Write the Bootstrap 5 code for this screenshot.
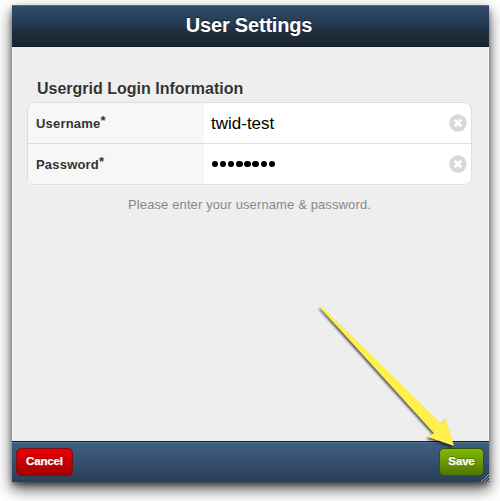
<!DOCTYPE html>
<html lang="en">
<head>
<meta charset="utf-8">
<meta name="viewport" content="width=device-width, initial-scale=1">
<title>User Settings</title>
<link href="https://cdn.jsdelivr.net/npm/bootstrap@5.3.0/dist/css/bootstrap.min.css" rel="stylesheet">
<style>
body{font-family:"Liberation Sans",Arial,sans-serif;background:#fff;height:501px;overflow:hidden;padding:5px 11px 0 12px;color:#333}
.window{height:477px;background:#eee;box-shadow:0 7px 14px rgba(0,0,0,.68),0 3px 5px rgba(0,0,0,.36)}
.title-bar{height:42px;background:linear-gradient(#304b69,#263a52 45%,#1f2d3d 65%,#1a2532);border-top:1px solid #58728e;border-bottom:1px solid #121b24;padding:0 3px 2px 0}
.title-bar h1{font-size:20px;line-height:24px;letter-spacing:-.2px;color:#fff;text-shadow:0 -1px 0 rgba(0,0,0,.5)}
.content-area{border:solid #fafafa;border-width:0 1px;padding:32px 16px 0 14px}
.section-title{font-size:16px;line-height:20px;font-weight:700;color:#333;padding-left:10px;margin-bottom:3px;text-shadow:0 1px 0 #fff}
.section-title span,.tip span,.title-bar span,.field-name span,.entry span,.action span{display:inline-block;white-space:nowrap}
.fieldset-box{height:83px;border:1px solid #ddd;border-radius:8px;background:#fff;overflow:hidden;box-shadow:0 1px 0 #f9f9f9}
.field{height:40px}
.field+.field{height:41px;border-top:1px solid #ddd}
.field-name{width:176px;background:#f7f7f7;padding:2px 0 0 8px;font-size:13px;letter-spacing:.2px;font-weight:700}
.field-name sup{font-size:13px;top:-3px;line-height:0}
.entry{padding:0 4px 0 7px;font-size:17px;color:#000}
.entry span{padding-top:2px}
.entry svg{margin-top:-1px}
.dots{gap:1.8px;padding-left:1px}
.dots i{width:6.3px;height:6.3px;border-radius:50%;background:#000}
.tip{font-size:13px;line-height:18px;letter-spacing:.12px;color:#888;margin-top:11px}
.action-bar{height:41px;border-top:1px solid #101820;background:linear-gradient(#405f85,#2a3e57);box-shadow:inset 0 1px 0 #5b7798;padding:0 5px 1px 4px}
.action{height:28px;font-size:11.5px;line-height:1;font-weight:700;color:#fff;padding:1px 0 0;border-radius:5px;letter-spacing:-.15px;text-shadow:0 -1px 0 rgba(0,0,0,.35);-webkit-text-stroke:.25px #fff}
.action:hover{color:#fff}
.cancel{width:57px;border:1px solid #800c16;background:linear-gradient(#ef0000,#a10000)}
.save{width:45px;border:1px solid #345113;background:linear-gradient(#83ba00,#527500)}
.pointer{left:300px;top:290px;filter:drop-shadow(-1px 2px 1.2px rgba(0,0,0,.6))}
.grip{right:0;bottom:0}
</style>
<script src="https://cdn.jsdelivr.net/npm/bootstrap@5.3.0/dist/js/bootstrap.bundle.min.js"></script>
</head>
<body>
<main class="window d-flex flex-column position-relative">
  <header class="title-bar d-flex align-items-center justify-content-center flex-shrink-0"><h1 class="fw-bold m-0"><span>User Settings</span></h1></header>
  <section class="content-area flex-grow-1">
    <h2 class="section-title mt-0"><span>Usergrid Login Information</span></h2>
    <div class="fieldset-box d-flex flex-column">
      <div class="field d-flex">
        <div class="field-name d-flex align-items-center"><span>Username<sup>*</sup></span></div>
        <div class="entry flex-grow-1 d-flex align-items-center justify-content-between">
          <span>twid-test</span>
          <svg width="18" height="18" viewBox="0 0 18 18" aria-label="Clear"><circle cx="9" cy="9" r="8.7" fill="#d8d8d8"/><path d="M5.7 5.7l6.6 6.6M12.3 5.7l-6.6 6.6" stroke="#fff" stroke-width="2.7"/></svg>
        </div>
      </div>
      <div class="field d-flex">
        <div class="field-name d-flex align-items-center"><span>Password<sup>*</sup></span></div>
        <div class="entry flex-grow-1 d-flex align-items-center justify-content-between">
          <div class="dots d-flex" aria-label="Hidden password"><i></i><i></i><i></i><i></i><i></i><i></i><i></i><i></i></div>
          <svg width="18" height="18" viewBox="0 0 18 18" aria-label="Clear"><circle cx="9" cy="9" r="8.7" fill="#d8d8d8"/><path d="M5.7 5.7l6.6 6.6M12.3 5.7l-6.6 6.6" stroke="#fff" stroke-width="2.7"/></svg>
        </div>
      </div>
    </div>
    <p class="tip text-center mb-0"><span>Please enter your username &amp; password.</span></p>
  </section>
  <footer class="action-bar d-flex align-items-center justify-content-between flex-shrink-0">
    <button type="button" class="btn action cancel"><span>Cancel</span></button>
    <button type="button" class="btn action save"><span>Save</span></button>
  </footer>
  <svg class="grip position-absolute" width="8" height="8" viewBox="0 0 8 8" stroke="#b5bfca" stroke-width=".8"><path d="M0 8L8 0M3 8l5-5M6 8l2-2"/></svg>
</main>
<svg class="pointer position-absolute" width="170" height="170" viewBox="0 0 170 170"><path d="M19.700 17.300Q20.700 15.800 22.300 17L141.700 134.300 145.600 128.600 154 156 127 146.800 134 143.300Z" fill="#fff04c"/></svg>
</body>
</html>
